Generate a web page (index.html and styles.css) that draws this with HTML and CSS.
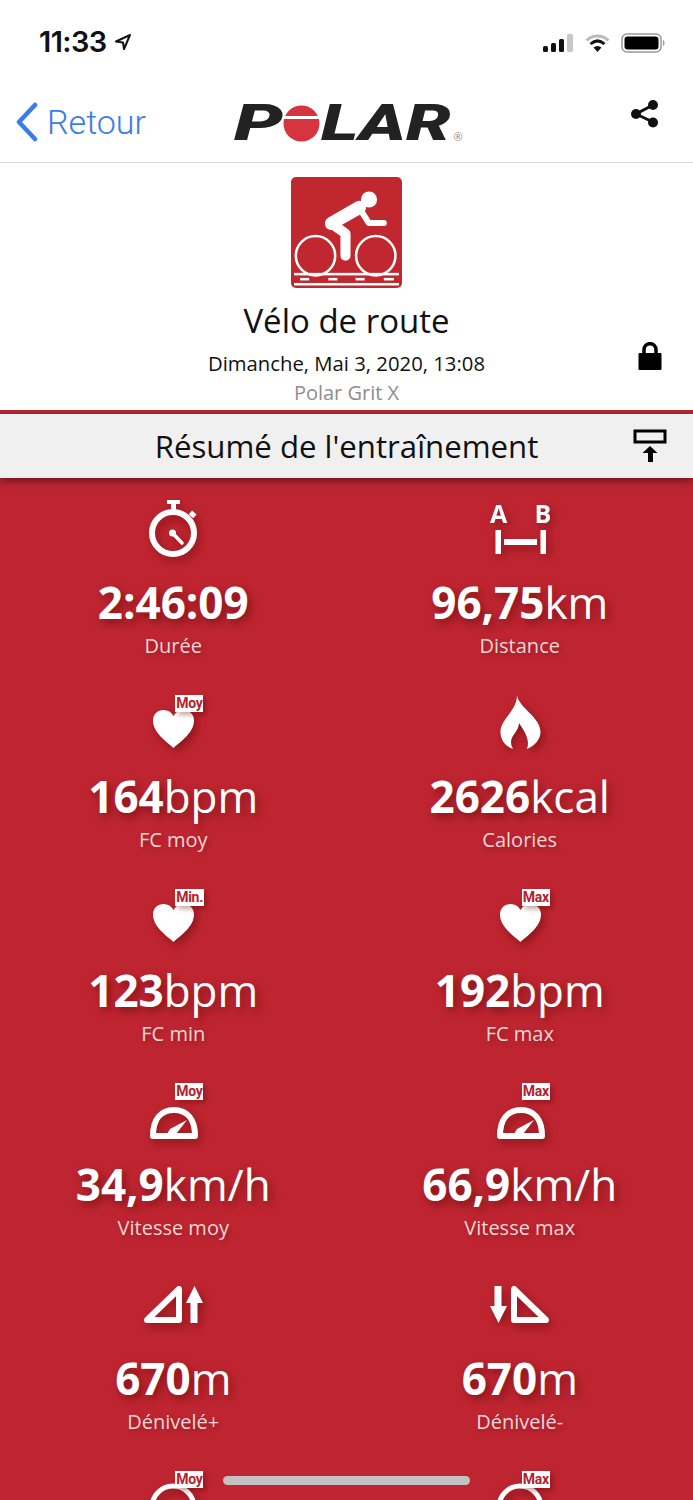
FILE: index.html
```html
<!DOCTYPE html>
<html lang="fr">
<head>
  <meta charset="utf-8">
  <title>Polar Flow</title>
  <link rel="stylesheet" href="styles.css">
</head>
<body>
  <svg class="defs" width="0" height="0">
    <symbol id="heart" viewBox="0 0 60 60">
      <path d="M30.5 57 C24 51 10 42 10 29.5 C10 23 15 19 20.5 19 C25 19 28.5 21 30.5 25 C32.5 21 36 19 40.5 19 C46 19 51 23 51 29.5 C51 42 37 51 30.5 57 Z" fill="#fff"/>
    </symbol>
    <symbol id="gauge" viewBox="0 0 60 60">
      <path d="M10 57 C10 40 18 31 31 31 C44 31 52 40 52 57 Z" fill="none" stroke="#fff" stroke-width="6" stroke-linejoin="round"/>
      <path d="M24 55 L27 50 L44 41 L33 55 Z" fill="#fff"/>
    </symbol>
  </svg>

  <div class="status-bar">
    <div class="time">
      11:33
      <svg width="18" height="18" viewBox="0 0 18 18"><path d="M16 2 L2 8.500 L9 9.500 L10 16 Z" fill="none" stroke="#111" stroke-width="2" stroke-linejoin="round"/></svg>
    </div>
    <div class="status-icons">
      <svg width="31" height="18" viewBox="0 0 31 18">
        <rect x="0" y="12" width="5" height="6" rx="1.500" fill="#111"/>
        <rect x="8" y="9" width="5" height="9" rx="1.500" fill="#111"/>
        <rect x="16" y="5" width="5" height="13" rx="1.500" fill="#111"/>
        <rect x="24" y="0" width="6" height="18" rx="1.500" fill="#c8c8c8"/>
      </svg>
      <svg width="25" height="18" viewBox="0 0 25 18">
        <path d="M1.500 6.500 C8 0.500 17 0.500 23.500 6.500" fill="none" stroke="#bbb" stroke-width="3"/>
        <path d="M5.500 10 C10 6 15 6 19.500 10" fill="none" stroke="#111" stroke-width="3"/>
        <path d="M12.500 18 L8.500 13.500 C11 11.500 14 11.500 16.500 13.500 Z" fill="#111"/>
      </svg>
      <svg width="45" height="20" viewBox="0 0 45 20">
        <rect x="1" y="1" width="39" height="18" rx="5" fill="none" stroke="#999" stroke-width="1.500"/>
        <rect x="3.500" y="3.500" width="34" height="13" rx="3" fill="#000"/>
        <path d="M42 7 C44 7.500 44 12.500 42 13 Z" fill="#999"/>
      </svg>
    </div>
  </div>

  <div class="nav">
    <div class="back">
      <svg width="24" height="40" viewBox="0 0 24 40"><path d="M20 3 L4 20 L20 37" fill="none" stroke="#3b7bea" stroke-width="4.500" stroke-linecap="round" stroke-linejoin="round"/></svg>
      <span>Retour</span>
    </div>
    <div class="logo">
      <span class="logo-letters">P</span>
      <svg class="logo-o" width="37" height="37" viewBox="0 0 37 37">
        <circle cx="18.500" cy="18.500" r="18" fill="#d6343f"/>
        <rect x="0" y="11" width="37" height="3" fill="#fff"/>
      </svg>
      <span class="logo-letters">LAR</span>
      <span class="logo-mark">®</span>
    </div>
    <svg class="share" width="30" height="30" viewBox="0 0 30 30">
      <path d="M23 6 L6 15 L23 23" fill="none" stroke="#111" stroke-width="3"/>
      <circle cx="23" cy="6" r="5" fill="#111"/>
      <circle cx="6" cy="15" r="5" fill="#111"/>
      <circle cx="23" cy="23.500" r="5" fill="#111"/>
    </svg>
  </div>

  <div class="workout-head">
    <div></div>
    <div class="workout-info">
      <svg class="sport-icon" width="111" height="111" viewBox="0 0 110 110">
        <rect width="110" height="110" rx="5" fill="#c1272f"/>
        <circle cx="77.300" cy="22.300" r="8" fill="#fff"/>
        <path d="M40 46 L68 30" stroke="#fff" stroke-width="13" stroke-linecap="round" fill="none"/>
        <path d="M68 31 L77 45.500 L92 45.500" stroke="#fff" stroke-width="6" stroke-linecap="round" stroke-linejoin="round" fill="none"/>
        <circle cx="24.300" cy="78" r="19.500" fill="#c1272f" stroke="#fff" stroke-width="2.500"/>
        <circle cx="84" cy="78" r="19.500" fill="#c1272f" stroke="#fff" stroke-width="2.500"/>
        <path d="M40 46 L54 56 L54 78" stroke="#fff" stroke-width="10" stroke-linecap="round" stroke-linejoin="round" fill="none"/>
        <rect x="3" y="95" width="104" height="2.500" fill="#fff"/>
        <rect x="9" y="100" width="9" height="2.500" fill="#fff"/>
        <rect x="37" y="100" width="9" height="2.500" fill="#fff"/>
        <rect x="64" y="100" width="9" height="2.500" fill="#fff"/>
        <rect x="92" y="100" width="10" height="2.500" fill="#fff"/>
        <rect x="3" y="105" width="104" height="2.500" fill="#fff"/>
      </svg>
      <div class="sport-name">Vélo de route</div>
      <div class="sport-date">Dimanche, Mai 3, 2020, 13:08</div>
      <div class="sport-device">Polar Grit X</div>
    </div>
    <svg class="lock" width="24" height="28" viewBox="0 0 24 28">
      <path d="M6 12 V8 C6 -0.500 18 -0.500 18 8 V12" fill="none" stroke="#000" stroke-width="3.500"/>
      <rect x="0.500" y="11" width="23" height="17" rx="1" fill="#000"/>
    </svg>
  </div>

  <div class="summary-bar">
    <div></div>
    <div class="summary-title">Résumé de l'entraînement</div>
    <svg class="pin" width="34" height="34" viewBox="0 0 34 34">
      <rect x="2" y="2" width="30" height="11" fill="none" stroke="#000" stroke-width="3"/>
      <path d="M17 17 L24.500 24 L20 24 L20 33 L15 33 L15 24 L9.500 24 Z" fill="#000"/>
    </svg>
  </div>

  <div class="stats">
    <div class="stat">
      <div class="stat-icon">
        <svg width="60" height="60" viewBox="0 0 60 60">
          <circle cx="30" cy="36" r="21" fill="none" stroke="#fff" stroke-width="6"/>
          <rect x="24" y="3" width="13" height="4" fill="#fff"/>
          <rect x="28" y="3" width="5" height="10" fill="#fff"/>
          <rect x="47" y="15" width="6" height="5" fill="#fff" transform="rotate(42 50 17)"/>
          <circle cx="29.500" cy="36" r="3.500" fill="#fff"/>
          <path d="M29.500 36 L39 46" stroke="#fff" stroke-width="3.500" stroke-linecap="round"/>
        </svg>
      </div>
      <div class="stat-value"><b>2:46:09</b></div>
      <div class="stat-label">Durée</div>
    </div>
    <div class="stat">
      <div class="stat-icon">
        <svg width="60" height="60" viewBox="0 0 60 60">
          <text x="8.500" y="26" class="ab-letter">A</text>
          <text x="53" y="26" class="ab-letter">B</text>
          <rect x="5.500" y="33" width="5.500" height="24" fill="#fff"/>
          <rect x="50.500" y="33" width="5.500" height="24" fill="#fff"/>
          <rect x="14" y="42" width="33" height="6" fill="#fff"/>
        </svg>
      </div>
      <div class="stat-value"><b>96,75</b>km</div>
      <div class="stat-label">Distance</div>
    </div>

    <div class="stat">
      <div class="stat-icon">
        <svg width="60" height="60"><use href="#heart"/></svg>
        <span class="tag">Moy</span>
      </div>
      <div class="stat-value"><b>164</b>bpm</div>
      <div class="stat-label">FC moy</div>
    </div>
    <div class="stat">
      <div class="stat-icon">
        <svg width="60" height="60" viewBox="0 0 60 60">
          <path d="M27 4 C28 16 50.500 26 50.500 41 C50.500 49 44 55 37 58 C40 50 36 42 29 32 C29 40 21 44 21 51 C21 54 22 56 23 58 C15 55 10.500 49 10.500 41 C10.500 28 27 20 27 4 Z" fill="#fff"/>
        </svg>
      </div>
      <div class="stat-value"><b>2626</b>kcal</div>
      <div class="stat-label">Calories</div>
    </div>

    <div class="stat">
      <div class="stat-icon">
        <svg width="60" height="60"><use href="#heart"/></svg>
        <span class="tag">Min.</span>
      </div>
      <div class="stat-value"><b>123</b>bpm</div>
      <div class="stat-label">FC min</div>
    </div>
    <div class="stat">
      <div class="stat-icon">
        <svg width="60" height="60"><use href="#heart"/></svg>
        <span class="tag">Max</span>
      </div>
      <div class="stat-value"><b>192</b>bpm</div>
      <div class="stat-label">FC max</div>
    </div>

    <div class="stat">
      <div class="stat-icon">
        <svg width="60" height="60"><use href="#gauge"/></svg>
        <span class="tag">Moy</span>
      </div>
      <div class="stat-value"><b>34,9</b>km/h</div>
      <div class="stat-label">Vitesse moy</div>
    </div>
    <div class="stat">
      <div class="stat-icon">
        <svg width="60" height="60"><use href="#gauge"/></svg>
        <span class="tag">Max</span>
      </div>
      <div class="stat-value"><b>66,9</b>km/h</div>
      <div class="stat-label">Vitesse max</div>
    </div>

    <div class="stat">
      <div class="stat-icon">
        <svg width="60" height="60" viewBox="0 0 60 60">
          <path d="M36 16 V47 H4 Z" fill="none" stroke="#fff" stroke-width="6" stroke-linejoin="round"/>
          <path d="M51.500 13 L60 30 L54.500 30 L54.500 50 L47.500 50 L47.500 30 L43 30 Z" fill="#fff"/>
        </svg>
      </div>
      <div class="stat-value"><b>670</b>m</div>
      <div class="stat-label">Dénivelé+</div>
    </div>
    <div class="stat">
      <div class="stat-icon">
        <svg width="60" height="60" viewBox="0 0 60 60">
          <path d="M24 16 V47 H56 Z" fill="none" stroke="#fff" stroke-width="6" stroke-linejoin="round"/>
          <path d="M8.500 50 L0 33 L4.500 33 L4.500 13 L11.500 13 L11.500 33 L17 33 Z" fill="#fff"/>
        </svg>
      </div>
      <div class="stat-value"><b>670</b>m</div>
      <div class="stat-label">Dénivelé-</div>
    </div>

    <div class="stat">
      <div class="stat-icon">
        <svg width="60" height="60" viewBox="0 0 60 60"><circle cx="30" cy="40" r="21" fill="none" stroke="#fff" stroke-width="5"/></svg>
        <span class="tag">Moy</span>
      </div>
    </div>
    <div class="stat">
      <div class="stat-icon">
        <svg width="60" height="60" viewBox="0 0 60 60"><circle cx="30" cy="40" r="21" fill="none" stroke="#fff" stroke-width="5"/></svg>
        <span class="tag">Max</span>
      </div>
    </div>
  </div>

  <div class="home-indicator"></div>
</body>
</html>
```

FILE: styles.css
```css
html, body {
  margin: 0;
  height: 1500px;
  overflow: hidden;
}

body {
  position: relative;
  font-family: "Open Sans", sans-serif;
  background: #fff;
  color: #111;
}

.defs {
  position: absolute;
}

.status-bar {
  height: 84px;
  padding: 24px 27px 0 39px;
  box-sizing: border-box;
  display: flex;
  justify-content: space-between;
  align-items: flex-start;
}

.time {
  display: flex;
  align-items: center;
  gap: 7px;
  font-family: Inter, sans-serif;
  font-size: 29px;
  line-height: 36px;
  font-weight: 600;
  letter-spacing: -0.6px;
}

.status-icons {
  display: flex;
  align-items: center;
  gap: 11px;
  padding-top: 9px;
}

.nav {
  height: 79px;
  padding: 0 33px 0 15px;
  box-sizing: border-box;
  display: grid;
  grid-template-columns: 1fr auto 1fr;
  align-items: center;
  border-bottom: 1px solid #d8d8d8;
}

.back {
  display: flex;
  align-items: center;
  gap: 8px;
  color: #3b7bea;
  font-family: Roboto, sans-serif;
  font-size: 34px;
  font-weight: 300;
  margin-top: -2px;
}

.logo {
  display: flex;
  align-items: center;
  width: 230px;
  margin-left: 22px;
  height: 50px;
  color: #222;
}

.logo-letters {
  display: inline-block;
  font-family: Roboto, sans-serif;
  font-size: 50px;
  font-weight: 900;
  font-style: italic;
  line-height: 50px;
}

.logo-letters:first-child {
  width: 49px;
  transform: scaleX(1.55);
  transform-origin: left center;
}

.logo-letters:nth-child(3) {
  width: 134px;
  margin-left: 1px;
  transform: scaleX(1.42);
  transform-origin: left center;
}

.logo-o {
  flex: none;
}

.logo-mark {
  font-size: 11px;
  color: #888;
  align-self: flex-end;
  margin-left: -1px;
  padding-bottom: 4px;
}

.share {
  justify-self: end;
  margin-top: -18px;
}

.workout-head {
  height: 251px;
  box-sizing: border-box;
  display: grid;
  grid-template-columns: 1fr auto 1fr;
  border-bottom: 4px solid #b52733;
  padding: 14px 31px 0;
}

.workout-info {
  display: flex;
  flex-direction: column;
  align-items: center;
}

.sport-icon {
  display: block;
  flex: none;
}

.sport-name {
  font-size: 33px;
  line-height: 44px;
  margin-top: 11px;
}

.sport-date {
  font-size: 20.300px;
  line-height: 28px;
  margin-top: 6px;
}

.sport-device {
  font-size: 20px;
  line-height: 28px;
  margin-top: 2px;
  color: #8e8e8e;
}

.lock {
  justify-self: end;
  margin-top: 165px;
}

.summary-bar {
  position: relative;
  z-index: 1;
  height: 64px;
  padding: 0 26px;
  box-sizing: border-box;
  display: grid;
  grid-template-columns: 1fr auto 1fr;
  align-items: center;
  background: #f0f0f0;
  box-shadow: 0 3px 8px rgba(0, 0, 0, 0.45);
}

.summary-title {
  font-size: 31.200px;
  line-height: 40px;
}

.pin {
  justify-self: end;
}

.stats {
  display: grid;
  grid-template-columns: 1fr 1fr;
  grid-auto-rows: 194px;
  background: #bf2530;
  color: #fff;
  height: 1022px;
  overflow: hidden;
}

.stat {
  display: flex;
  flex-direction: column;
  align-items: center;
  padding-top: 19px;
  box-sizing: border-box;
}

.stat-icon {
  position: relative;
  width: 60px;
  height: 60px;
  flex: none;
}

.stat-icon svg {
  display: block;
  overflow: visible;
  filter: drop-shadow(3px 4px 5px rgba(80, 0, 0, 0.45));
}

.ab-letter {
  font-family: "Open Sans", sans-serif;
  font-size: 25px;
  font-weight: 700;
  fill: #fff;
  text-anchor: middle;
}

.tag {
  position: absolute;
  left: 32px;
  top: 4px;
  height: 17px;
  padding: 0 1px;
  background: #fff;
  color: #b5202c;
  font-family: "Liberation Sans Narrow", Roboto, sans-serif;
  font-size: 14px;
  line-height: 17px;
  font-weight: 700;
  letter-spacing: -0.3px;
  box-shadow: 3px 3px 5px rgba(80, 0, 0, 0.35);
}

.stat-value {
  margin-top: 20px;
  font-size: 44px;
  line-height: 50px;
  white-space: nowrap;
  text-shadow: 3px 4px 8px rgba(70, 0, 0, 0.5);
}

.stat-value b {
  font-weight: 700;
}

.stat-label {
  margin-top: 5px;
  font-size: 20px;
  line-height: 28px;
  color: #f3d6d8;
  text-shadow: 2px 3px 5px rgba(70, 0, 0, 0.3);
}

.home-indicator {
  position: absolute;
  left: 223px;
  top: 1476px;
  width: 247px;
  height: 9px;
  border-radius: 5px;
  background: #c2c2c2;
}
```
